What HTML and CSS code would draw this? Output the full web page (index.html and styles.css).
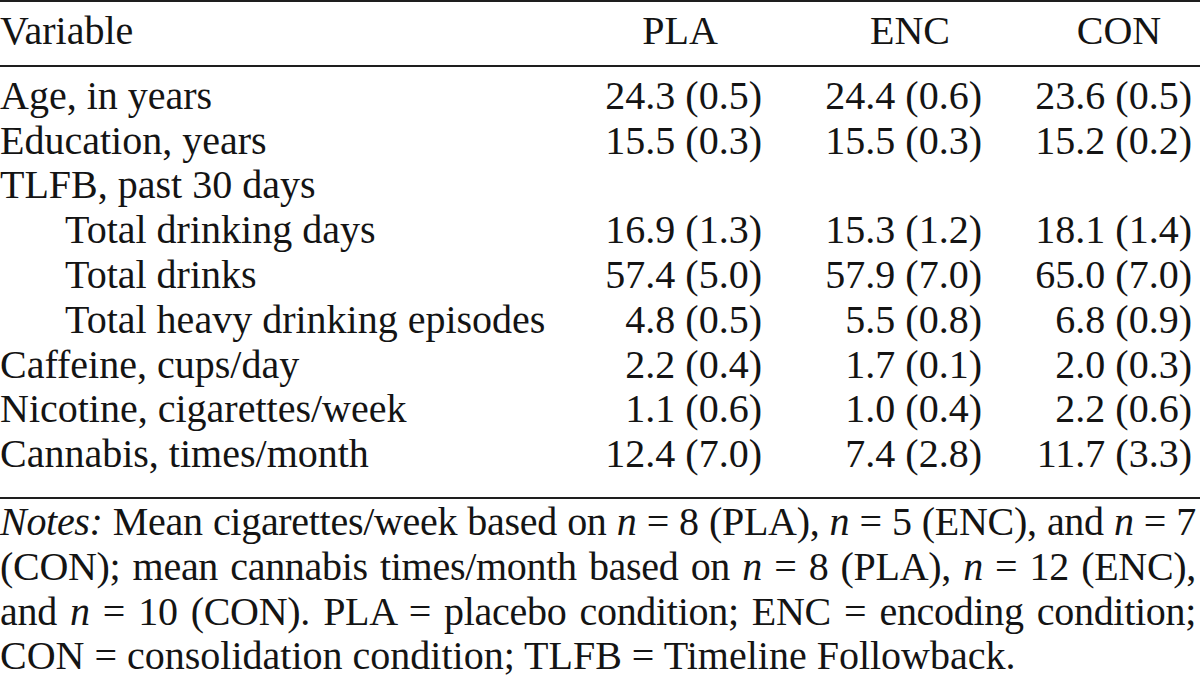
FILE: index.html
```html
<!DOCTYPE html>
<html lang="en">
<head>
<meta charset="utf-8">
<title>Participant characteristics</title>
<link rel="stylesheet" href="styles.css">
</head>
<body>
<div class="wrap">
  <table class="data">
    <colgroup>
      <col class="c-label">
      <col class="c-pla">
      <col class="c-enc">
      <col class="c-con">
    </colgroup>
    <thead>
      <tr>
        <th class="h-label">Variable</th>
        <th class="h-pla">PLA</th>
        <th class="h-enc">ENC</th>
        <th class="h-con">CON</th>
      </tr>
    </thead>
    <tbody>
      <tr class="first">
        <td class="label">Age, in years</td>
        <td class="num">24.3 (0.5)</td>
        <td class="num">24.4 (0.6)</td>
        <td class="num last">23.6 (0.5)</td>
      </tr>
      <tr>
        <td class="label">Education, years</td>
        <td class="num">15.5 (0.3)</td>
        <td class="num">15.5 (0.3)</td>
        <td class="num last">15.2 (0.2)</td>
      </tr>
      <tr>
        <td class="label">TLFB, past 30 days</td>
        <td class="num"></td>
        <td class="num"></td>
        <td class="num last"></td>
      </tr>
      <tr>
        <td class="label sub">Total drinking days</td>
        <td class="num">16.9 (1.3)</td>
        <td class="num">15.3 (1.2)</td>
        <td class="num last">18.1 (1.4)</td>
      </tr>
      <tr>
        <td class="label sub">Total drinks</td>
        <td class="num">57.4 (5.0)</td>
        <td class="num">57.9 (7.0)</td>
        <td class="num last">65.0 (7.0)</td>
      </tr>
      <tr>
        <td class="label sub">Total heavy drinking episodes</td>
        <td class="num">4.8 (0.5)</td>
        <td class="num">5.5 (0.8)</td>
        <td class="num last">6.8 (0.9)</td>
      </tr>
      <tr>
        <td class="label">Caffeine, cups/day</td>
        <td class="num">2.2 (0.4)</td>
        <td class="num">1.7 (0.1)</td>
        <td class="num last">2.0 (0.3)</td>
      </tr>
      <tr>
        <td class="label">Nicotine, cigarettes/week</td>
        <td class="num">1.1 (0.6)</td>
        <td class="num">1.0 (0.4)</td>
        <td class="num last">2.2 (0.6)</td>
      </tr>
      <tr class="final">
        <td class="label">Cannabis, times/month</td>
        <td class="num">12.4 (7.0)</td>
        <td class="num">7.4 (2.8)</td>
        <td class="num last">11.7 (3.3)</td>
      </tr>
    </tbody>
  </table>
  <div class="notes">
    <span class="line"><em>Notes:</em> Mean cigarettes/week based on <em>n</em> = 8 (PLA), <em>n</em> = 5 (ENC), and <em>n</em> = 7</span>
    <span class="line">(CON); mean cannabis times/month based on <em>n</em> = 8 (PLA), <em>n</em> = 12 (ENC),</span>
    <span class="line">and <em>n</em> = 10 (CON). PLA = placebo condition; ENC = encoding condition;</span>
    <span class="line end">CON = consolidation condition; TLFB = Timeline Followback.</span>
  </div>
</div>
</body>
</html>
```

FILE: styles.css
```css
html, body {
  margin: 0;
  padding: 0;
  background: #ffffff;
}

body {
  font-family: "Liberation Serif", "Times New Roman", serif;
  font-size: 40px;
  line-height: 44.8px;
  color: #141414;
}

.wrap {
  width: 1200px;
}

.data {
  width: 1200px;
  table-layout: fixed;
  border-collapse: collapse;
  border-spacing: 0;
}

.c-label { width: 542px; }
.c-pla { width: 220px; }
.c-enc { width: 220px; }
.c-con { width: 218px; }

.data th,
.data td {
  padding: 0;
  font-weight: normal;
  white-space: nowrap;
  vertical-align: baseline;
}

.data thead tr {
  border-top: 2px solid #1e1e1e;
  border-bottom: 2px solid #1e1e1e;
}

.data thead th {
  padding-top: 7px;
  padding-bottom: 11px;
  text-align: center;
}

.data thead th.h-label {
  text-align: left;
}

.data thead th.h-pla { padding-left: 56px; }
.data thead th.h-enc { padding-left: 76px; }
.data thead th.h-con { padding-left: 64px; padding-right: 8px; }

.data tbody tr.final {
  border-bottom: 2px solid #1e1e1e;
}

.data tbody tr.first td {
  padding-top: 7px;
}

.data tbody tr.final td {
  padding-bottom: 20px;
}

.label {
  text-align: left;
}

.label.sub {
  padding-left: 65px;
}

.num {
  text-align: right;
}

.num.last {
  padding-right: 8px;
}

.notes {
  margin-top: 1px;
  width: 1196px;
}

.notes .line {
  display: block;
  white-space: nowrap;
  letter-spacing: -0.3px;
  text-align: justify;
  text-align-last: justify;
}

.notes .line.end {
  letter-spacing: 0;
  text-align: left;
  text-align-last: left;
}

.notes em {
  font-style: italic;
}
```
